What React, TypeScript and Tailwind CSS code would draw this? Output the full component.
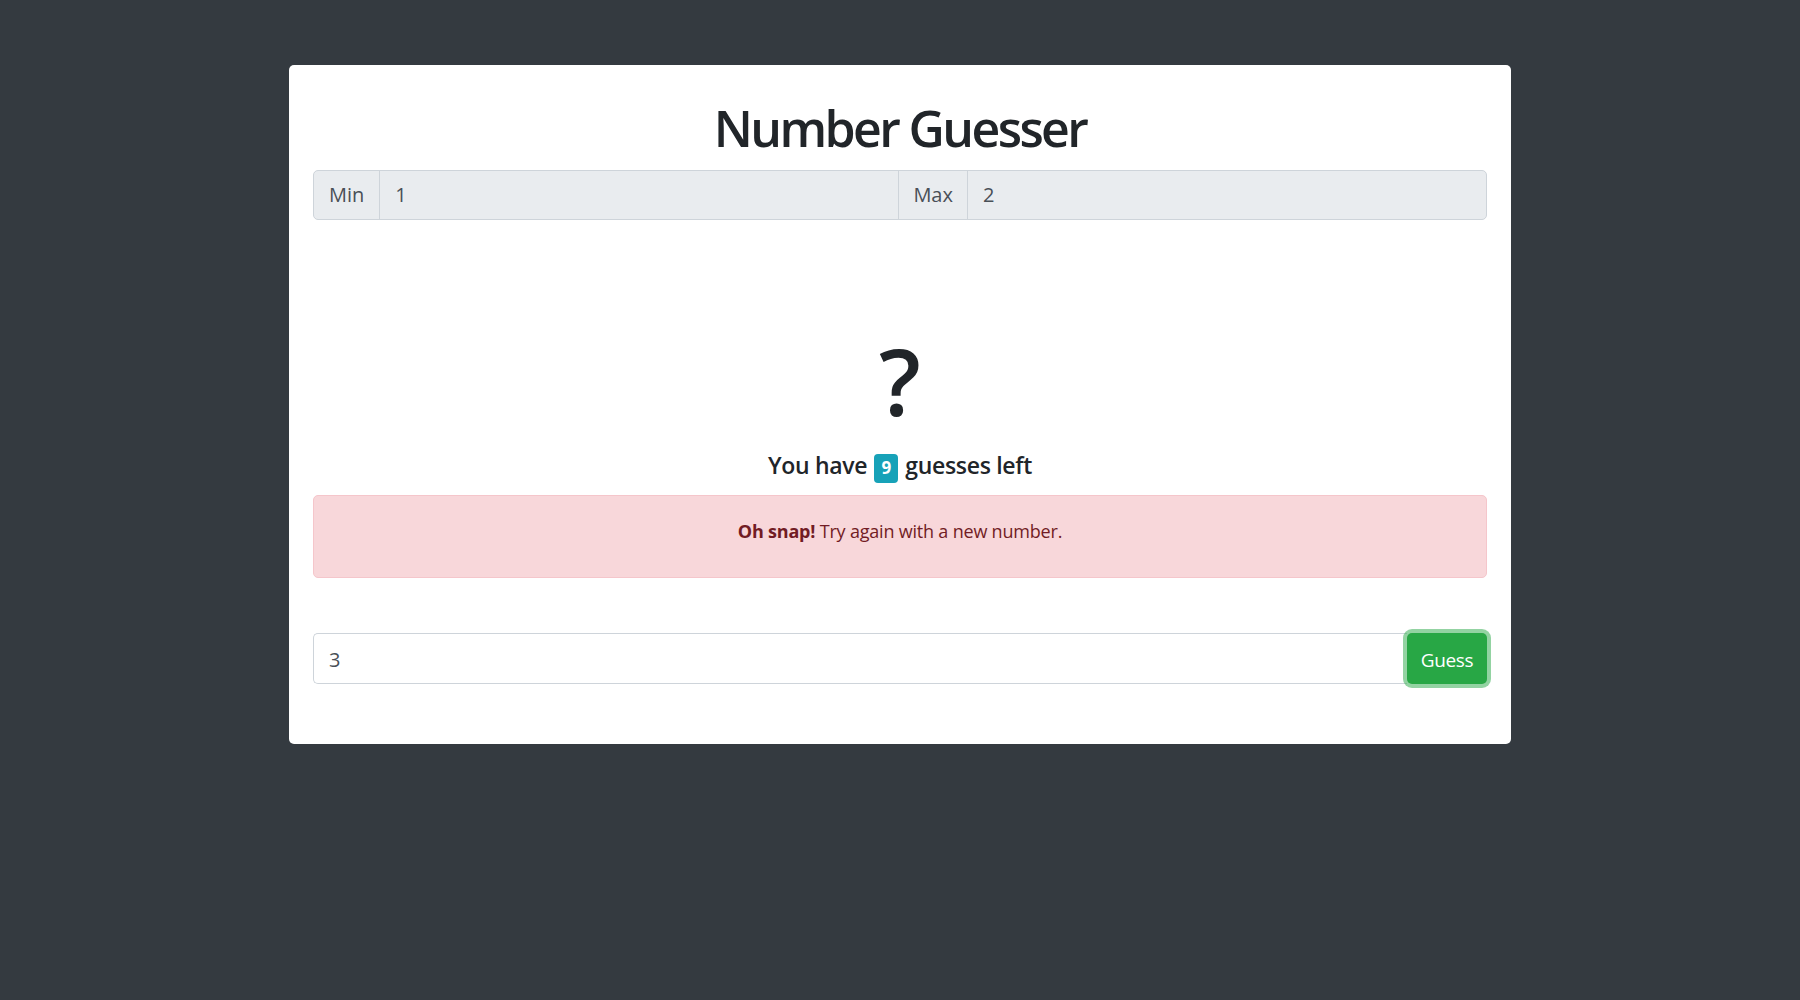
import React, { useState } from 'react';

const font = { fontFamily: '"Open Sans", "Noto Sans", sans-serif' };

export default function App() {
  const [guess, setGuess] = useState('3');

  return (
    <div className="min-h-screen bg-[#343a40] pt-[65px]" style={font}>
      <div className="mx-auto w-[1222px] rounded-[5px] bg-white px-6 pt-[32px] pb-[60px]">
        <h1 className="mb-[11px] h-[62px] text-center text-[50px] leading-[62px] font-semibold tracking-[-2.6px] text-[#212529]">
          Number Guesser
        </h1>

        {/* min / max range */}
        <div className="flex h-[50px] rounded-[5px] border border-[#ced4da] bg-[#e9ecef] text-[20px] text-[#495057]">
          <span className="flex items-center border-r border-[#ced4da] px-[15px]">Min</span>
          <input
            readOnly
            value="1"
            className="min-w-0 flex-1 bg-transparent px-[15px] outline-none"
          />
          <span className="flex items-center border-x border-[#ced4da] px-[14px]">Max</span>
          <input
            readOnly
            value="2"
            className="min-w-0 flex-1 bg-transparent px-[15px] outline-none"
          />
        </div>

        <div className="mt-[115px] text-center text-[92px] leading-none font-semibold text-[#212529]">?</div>

        <div className="mt-[23px] flex h-[30px] items-center justify-center gap-[7px] text-[23px] leading-[30px] font-semibold tracking-[-0.3px] text-[#212529]">
          <span>You have</span>
          <span className="mt-[6px] flex h-[29px] w-[24px] items-center justify-center rounded-[4px] bg-[#17a2b8] text-[17px] font-bold text-white">
            9
          </span>
          <span>guesses left</span>
        </div>

        <div className="mt-[15px] flex h-[83px] items-center justify-center rounded-[5px] border border-[#f5c6cb] bg-[#f8d7da] pb-[11px] text-[18px] tracking-[-0.2px] text-[#721c24]">
          <span>
            <strong className="font-bold">Oh snap!</strong> Try again with a new number.
          </span>
        </div>

        <div className="mt-[55px] flex h-[51px]">
          <input
            value={guess}
            onChange={e => setGuess(e.target.value)}
            className="min-w-0 flex-1 rounded-l-[5px] border border-r-0 border-[#ced4da] bg-white px-[15px] pt-[3px] text-[20px] text-[#495057] outline-none"
          />
          <button className="w-[80px] rounded-[5px] bg-[#28a745] pt-[3px] text-[19px] tracking-[-0.3px] text-white shadow-[0_0_0_4px_rgba(40,167,69,0.5)]">
            Guess
          </button>
        </div>
      </div>
    </div>
  );
}
